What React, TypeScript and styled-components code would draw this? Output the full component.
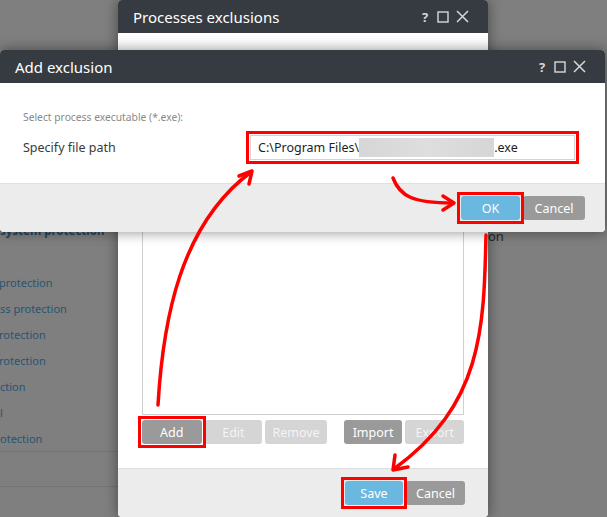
import React from "react"
import styled, { createGlobalStyle, css } from "styled-components"

const GlobalStyle = createGlobalStyle`
  html, body {
    margin: 0;
    padding: 0;
    background: #7f7f7f;
    overflow: hidden;
  }
  body {
    font-family: "Noto Sans", "Open Sans", Arial, sans-serif;
  }
`

// red annotation frame drawn over a marked control
const marked = (offset: number) => css`
  position: relative;
  &::after {
    content: "";
    position: absolute;
    inset: ${-(offset + 3)}px;
    border: 3px solid #f00;
    pointer-events: none;
    z-index: 2;
  }
`

const Page = styled.div`
  position: relative;
  width: 607px;
  height: 517px;
  overflow: hidden;
  display: flex;
  background: #7f7f7f;
`

const Sidebar = styled.nav`
  width: 118px;
  flex: none;
  padding-top: 222px;
  display: flex;
  flex-direction: column;
  overflow: hidden;
`

const SideHeading = styled.div`
  font-size: 11.5px;
  font-weight: 700;
  color: #22475e;
  height: 18px;
  line-height: 18px;
  white-space: nowrap;
  margin-bottom: 34px;
`

const SideItem = styled.div<{ $cut?: number }>`
  font-size: 11px;
  color: #275571;
  height: 26px;
  line-height: 18px;
  white-space: nowrap;
  text-indent: ${p => -(p.$cut || 0)}px;
`

const SideRule = styled.div<{ $gap: number }>`
  height: 1px;
  background: #737373;
  margin-top: ${p => p.$gap}px;
`

const MainPane = styled.div`
  flex: 1;
  padding: 227px 0 0 370px;
  font-size: 13px;
  color: #2a2a2a;
  white-space: nowrap;
  overflow: hidden;
`

const Window = styled.div`
  position: absolute;
  display: flex;
  flex-direction: column;
  background: #fff;
  border-radius: 4px;
  overflow: hidden;
  box-shadow: 0 0 14px rgba(0, 0, 0, 0.45);
`

const ProcessesWindow = styled(Window)`
  left: 118px;
  top: 0;
  width: 370px;
  height: 517px;
`

const AddWindow = styled(Window)`
  left: 0;
  top: 50px;
  width: 605px;
  height: 182px;
`

const TitleBar = styled.div`
  height: 33px;
  flex: none;
  display: flex;
  align-items: center;
  background: #363b42;
  color: #fff;
  font-size: 15px;
  padding: 0 19px 0 15px;
`

const TitleText = styled.div`
  flex: 1;
  white-space: nowrap;
`

const TitleTools = styled.div`
  display: flex;
  align-items: center;
  gap: 7px;
  color: #d8d8d8;
`

const HelpGlyph = styled.span`
  font-size: 13px;
  font-weight: 700;
  width: 10px;
  text-align: center;
`

const Body = styled.div`
  flex: 1;
  display: flex;
  flex-direction: column;
`

const ListBox = styled.div`
  margin: 62px 24px 0;
  height: 318px;
  border: 1px solid #cfcfcf;
  background: #fff;
`

const ButtonRow = styled.div`
  display: flex;
  gap: 3px;
  margin: 5px 24px 0;
`

const GroupGap = styled.div`
  width: 11px;
`

type Variant = "primary" | "dark" | "disabled"

const Button = styled.button<{ $variant: Variant; $w: number; $mark?: boolean }>`
  width: ${p => p.$w}px;
  height: 24px;
  border: none;
  border-radius: 3px;
  padding: 0;
  font-family: inherit;
  font-size: 12.5px;
  color: #fff;
  ${p =>
    p.$variant === "primary" &&
    css`
      background: #6ab8df;
    `}
  ${p =>
    p.$variant === "dark" &&
    css`
      background: #9a9a9a;
    `}
  ${p =>
    p.$variant === "disabled" &&
    css`
      background: #d5d5d5;
      color: #f4f4f4;
    `}
  ${p => p.$mark && marked(1)}
`

const Footer = styled.div`
  height: 48px;
  flex: none;
  display: flex;
  align-items: center;
  justify-content: flex-end;
  gap: 3px;
  background: #ececec;
  border-top: 1px solid #e0e0e0;
`

const ProcFooter = styled(Footer)`
  margin-top: auto;
  padding-right: 23px;
`

const AddFooter = styled(Footer)`
  padding-right: 20px;
`

const AddBody = styled.div`
  flex: 1;
  padding: 26px 30px 0 23px;
`

const Hint = styled.div`
  font-size: 10.3px;
  color: #8a8a8a;
  height: 16px;
  line-height: 16px;
`

const FieldRow = styled.div`
  display: flex;
  align-items: center;
  margin-top: 10px;
`

const FieldLabel = styled.div`
  width: 227px;
  font-size: 12.5px;
  color: #3a3a3a;
`

const Input = styled.div`
  width: 325px;
  height: 25px;
  box-sizing: border-box;
  border: 1px solid #d3d3d3;
  display: flex;
  align-items: center;
  padding-left: 7px;
  font-size: 12.5px;
  color: #1e1e1e;
  white-space: nowrap;
  ${marked(2)}
`

const Redacted = styled.span`
  display: inline-block;
  width: 135px;
  height: 19px;
  background: linear-gradient(90deg, #d6d6d6, #dedede 50%, #d6d6d6);
`

const Arrows = styled.svg`
  position: absolute;
  left: 0;
  top: 0;
  pointer-events: none;
  z-index: 5;
`

const SquareIcon = () => (
  <svg width="12" height="12" viewBox="0 0 12 12">
    <rect x="1" y="1" width="10" height="10" fill="none" stroke="#d8d8d8" strokeWidth="1.4" />
  </svg>
)

const CloseIcon = () => (
  <svg width="13" height="13" viewBox="0 0 13 13">
    <path d="M1 1L12 12M12 1L1 12" stroke="#d8d8d8" strokeWidth="1.5" />
  </svg>
)

const Title = ({ text }: { text: string }) => (
  <TitleBar>
    <TitleText>{text}</TitleText>
    <TitleTools>
      <HelpGlyph>?</HelpGlyph>
      <SquareIcon />
      <CloseIcon />
    </TitleTools>
  </TitleBar>
)

const sideItems: [string, number][] = [
  ["protection", 1],
  ["ss protection", 0],
  ["rotection", 1],
  ["rotection", 1],
  ["ction", 0],
  ["l", 0],
  ["otection", 0],
]

export default function App() {
  return (
    <>
      <GlobalStyle />
      <Page>
        <Sidebar>
          <SideHeading>system protection</SideHeading>
          {sideItems.map(([t, c], i) => (
            <SideItem key={i} $cut={c}>
              {t}
            </SideItem>
          ))}
          <SideRule $gap={-5} />
          <SideRule $gap={34} />
        </Sidebar>
        <MainPane>on</MainPane>

        <ProcessesWindow>
          <Title text="Processes exclusions" />
          <Body>
            <ListBox />
            <ButtonRow>
              <Button $variant="dark" $w={60} $mark>
                Add
              </Button>
              <Button $variant="disabled" $w={58}>
                Edit
              </Button>
              <Button $variant="disabled" $w={62}>
                Remove
              </Button>
              <GroupGap />
              <Button $variant="dark" $w={59}>
                Import
              </Button>
              <Button $variant="disabled" $w={59}>
                Export
              </Button>
            </ButtonRow>
            <ProcFooter>
              <Button $variant="primary" $w={58} $mark>
                Save
              </Button>
              <Button $variant="dark" $w={59}>
                Cancel
              </Button>
            </ProcFooter>
          </Body>
        </ProcessesWindow>

        <AddWindow>
          <Title text="Add exclusion" />
          <AddBody>
            <Hint>Select process executable (*.exe):</Hint>
            <FieldRow>
              <FieldLabel>Specify file path</FieldLabel>
              <Input>
                C:\Program Files\
                <Redacted />
                .exe
              </Input>
            </FieldRow>
          </AddBody>
          <AddFooter>
            <Button $variant="primary" $w={59} $mark>
              OK
            </Button>
            <Button $variant="dark" $w={62}>
              Cancel
            </Button>
          </AddFooter>
        </AddWindow>

        <Arrows width="607" height="517" viewBox="0 0 607 517">
          <g fill="none" stroke="#f00" strokeWidth="3.5" strokeLinecap="round" strokeLinejoin="round">
            <path d="M158 405C163 320 180 225 251 172" />
            <path d="M239 176L252 171L249 184" />
            <path d="M393 178C400 196 412 203 453 203" />
            <path d="M443 196L454 203L443 210" />
            <path d="M486 235C484 330 482 405 394 469" />
            <path d="M395 455L393 470L408 467" />
          </g>
        </Arrows>
      </Page>
    </>
  )
}
